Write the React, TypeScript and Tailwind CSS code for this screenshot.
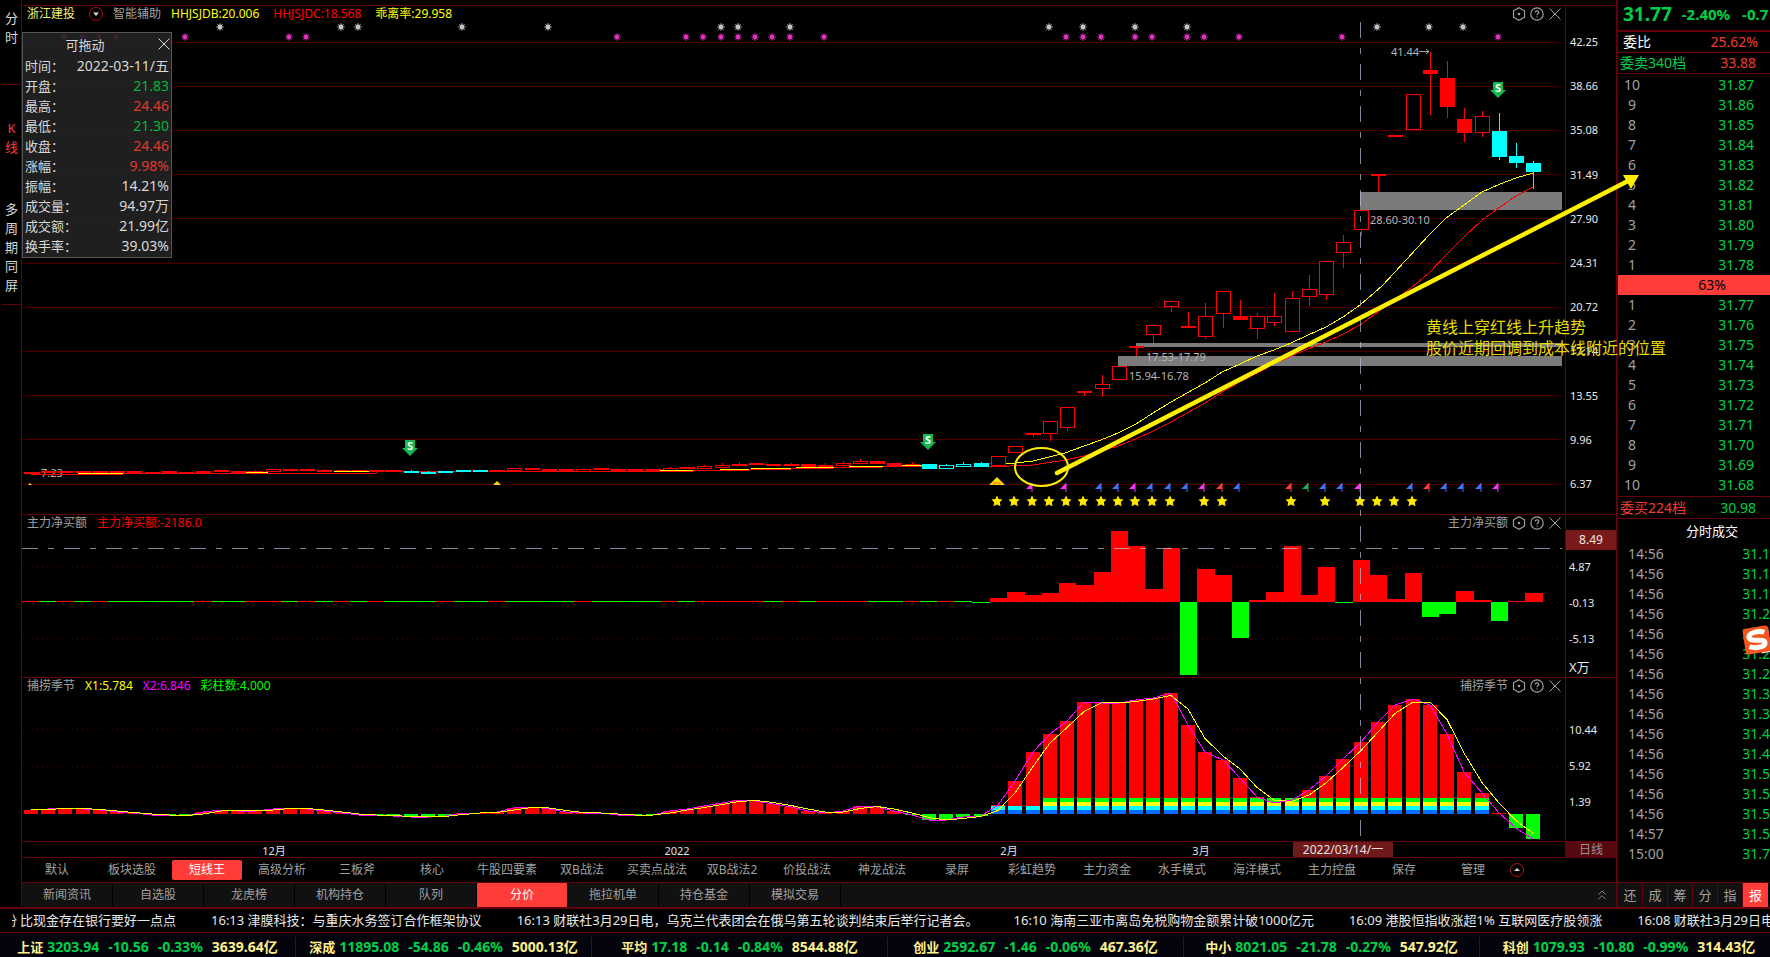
import { ReactNode } from "react";
import { ChevronsUp } from "lucide-react";

type CandleKind = "up" | "flat" | "down" | "downHollow";

interface Candle {
    kind: CandleKind;
    top: number;
    bottom: number;
    high?: number;
    low?: number;
}

// chart geometry, shared by the three panels
const FIRST_X = 30.7;
const STEP = 17.273;
const ZERO_FLOW = 602;
const ZERO_SEASON = 814;

const barX = (i: number) => Math.round(FIRST_X + STEP * i);

const flat = (y: number, high?: number): Candle => ({
    kind: "flat",
    top: y - 1,
    bottom: y + 1,
    high,
});

const up = (
    top: number,
    bottom: number,
    high?: number,
    low?: number
): Candle => ({ kind: "up", top, bottom, high, low });

const full = (
    top: number,
    bottom: number,
    high?: number,
    low?: number
): Candle => ({ kind: "flat", top, bottom, high, low });

const down = (
    top: number,
    bottom: number,
    high?: number,
    low?: number
): Candle => ({ kind: "down", top, bottom, high, low });

const downHollow = (top: number, bottom: number, high?: number): Candle => ({
    kind: "downHollow",
    top,
    bottom,
    high,
});

const candles: Candle[] = [
    flat(473), flat(472), flat(472), flat(472), flat(472), flat(472),
    flat(472), flat(473), flat(472), flat(473), flat(472, 470), flat(471),
    flat(472), flat(472, 470), up(469, 471), flat(470), flat(470),
    flat(471, 469), flat(471), flat(471), flat(471), flat(471),
    down(471, 473, 470), down(472, 474, 471), down(471, 473),
    down(470, 472), down(470, 472), flat(471), up(468, 470), flat(469),
    flat(470), flat(470), up(469, 471), flat(469), flat(470), flat(470),
    flat(470), up(468, 470, 467), flat(468), up(466, 468, 465),
    up(465, 467, 463), flat(465, 462), flat(464), flat(465),
    flat(465, 463), full(464, 467), full(465, 467, 463),
    up(463, 465, 461, 467), up(461, 463, 459), full(461, 464),
    full(463, 466), full(464, 466, 462), down(464, 469),
    downHollow(465, 468, 464), downHollow(464, 466, 462),
    down(463, 467, 462), up(456, 465, 456, 467), up(446, 452),
    full(433, 435, 433, 437), up(421, 433, 421, 441),
    up(407, 427, 407, 431), full(391, 393, 391, 396),
    up(384, 388, 375, 397), up(366, 379), full(346, 348, 346, 356),
    up(325, 334, 325, 343), up(301, 306, 301, 312),
    full(326, 328, 312), up(316, 336, 303, 339), up(291, 313, 291, 328),
    full(316, 320, 300), up(316, 328, 313, 339), up(316, 322, 293, 326),
    up(298, 331, 291), up(289, 296, 275, 306), up(261, 294, 261, 300),
    up(242, 252, 235, 268), up(210, 229, 210, 236),
    full(174, 176, 174, 192), full(135, 137), up(94, 129),
    full(70, 74, 52, 115), full(78, 107, 61, 118),
    full(119, 133, 108, 142), up(116, 132, 111, 137),
    down(131, 157, 113, 160), down(156, 163, 143, 168),
    down(163, 172, 161, 189),
];

// net inflow: r / g for the quiet days, pixel tops for the later ones
const quietFlow = "rgrgrgggggrggrrgrgrgrgggrggrggggrggggrgrrrrgrgrrrggrgrgg";
const flowTops = [
    598, 592, 595, 593, 583, 585, 572, 530, 546, 589, 548, 675, 569, 575, 638,
    600, 592, 546, 595, 567, 603, 560, 575, 599, 573, 617, 614, 591, 600, 621,
    601, 593,
];

const seasonTops = [
    810, 809, 808, 809, 810, 812, 813, 815, 815, 816, 812, 810, 811, 811, 809,
    808, 809, 811, 813, 815, 815, 816, 817, 817, 816, 813, 813, 812, 808, 807,
    809, 812, 813, 813, 815, 815, 815, 811, 809, 806, 803, 800, 801, 804, 807,
    811, 813, 811, 806, 807, 811, 815, 820, 820, 817, 816, 805, 781, 752, 734,
    721, 702, 703, 703, 700, 698, 693, 725, 752, 760, 778, 797, 803, 800, 790,
    776, 759, 742, 722, 705, 699, 705, 734, 772, 793, 813, 828, 839,
];

const greyMarks = [11, 18, 19, 25, 30, 40, 41, 44, 59, 61, 64, 67, 78, 81, 83];
const pinkMarks = [
    2, 3, 4, 5, 9, 15, 16, 34, 38, 39, 40, 41, 42, 43, 44, 46, 60, 61, 62, 64,
    65, 67, 68, 70, 76, 85,
];
const starMarks = [
    56, 57, 58, 59, 60, 61, 62, 63, 64, 65, 66, 68, 69, 73, 75, 77, 78, 79, 80,
];
const PINK = "#ff30ff";
const BLUE = "#3c78ff";
const flagMarks: [number, string][] = [
    [58, PINK], [60, PINK], [62, BLUE], [63, BLUE], [64, PINK], [65, BLUE],
    [66, BLUE], [67, BLUE], [68, PINK], [69, "#ff3c3c"], [70, BLUE],
    [73, "#ff3c3c"], [74, "#12b44c"], [75, BLUE], [76, BLUE], [77, PINK],
    [80, BLUE], [81, "#ff3c3c"], [82, BLUE], [83, BLUE], [84, BLUE],
    [85, PINK],
];

const yellowLine =
    "1006,464 1033,461 1065,453 1084,446 1101,440 1118,433 1136,424 1153,413 1171,402 1187,393 1205,383 1222,372 1240,364 1257,356 1274,350 1291,343 1308,335 1326,327 1343,317 1360,305 1382,286 1406,260 1429,235 1446,218 1464,205 1482,192 1500,184 1516,178 1533,173";
const redLine =
    "31,474 123,474 124,473 376,473 377,472 590,471 693,471 694,470 750,470 834,468 883,467 925,466 1010,466 1033,465 1065,460 1084,456 1101,451 1118,446 1136,439 1153,431 1171,422 1187,413 1205,403 1222,392 1240,382 1257,373 1274,364 1291,356 1308,349 1326,342 1343,334 1360,325 1382,309 1411,288 1429,273 1446,255 1464,237 1482,220 1500,207 1516,196 1533,187";
const flatYellow: [number, number, number][] = [
    [78, 123, 473], [246, 268, 472], [334, 369, 471], [660, 693, 470],
    [720, 749, 469], [751, 791, 468], [796, 834, 467], [849, 883, 466],
    [902, 922, 465],
];

const priceTicks = [
    "42.25", "38.66", "35.08", "31.49", "27.90", "24.31", "20.72", "17.14",
    "13.55", "9.96", "6.37",
];

const quoteRows: [string, string, string][] = [
    ["开盘", "21.83", "text-[#00b83c]"],
    ["最高", "24.46", "text-[#e03830]"],
    ["最低", "21.30", "text-[#00b83c]"],
    ["收盘", "24.46", "text-[#e03830]"],
    ["涨幅", "9.98%", "text-[#e03830]"],
    ["振幅", "14.21%", "text-[#d8d8d8]"],
    ["成交量", "94.97万", "text-[#d8d8d8]"],
    ["成交额", "21.99亿", "text-[#d8d8d8]"],
    ["换手率", "39.03%", "text-[#d8d8d8]"],
];

const sells = [
    "31.87", "31.86", "31.85", "31.84", "31.83", "31.82", "31.81", "31.80",
    "31.79", "31.78",
];
const buys = [
    "31.77", "31.76", "31.75", "31.74", "31.73", "31.72", "31.71", "31.70",
    "31.69", "31.68",
];
const trades: [string, string][] = [
    ["14:56", "31.1"], ["14:56", "31.1"], ["14:56", "31.1"],
    ["14:56", "31.2"], ["14:56", "31.2"], ["14:56", "31.2"],
    ["14:56", "31.2"], ["14:56", "31.3"], ["14:56", "31.3"],
    ["14:56", "31.4"], ["14:56", "31.4"], ["14:56", "31.5"],
    ["14:56", "31.5"], ["14:56", "31.5"], ["14:57", "31.5"],
    ["15:00", "31.7"],
];

const templates = [
    "默认", "板块选股", "短线王", "高级分析", "三板斧", "核心", "牛股四要素",
    "双B战法", "买卖点战法", "双B战法2", "价投战法", "神龙战法", "录屏",
    "彩虹趋势", "主力资金", "水手模式", "海洋模式", "主力控盘",
];
const navTabs = [
    "新闻资讯", "自选股", "龙虎榜", "机构持仓", "队列", "分价", "拖拉机单",
    "持仓基金", "模拟交易",
];
const sideTabs = ["还", "成", "筹", "分", "指", "报"];

const news = [
    "16:13 津膜科技：与重庆水务签订合作框架协议",
    "16:13 财联社3月29日电，乌克兰代表团会在俄乌第五轮谈判结束后举行记者会。",
    "16:10 海南三亚市离岛免税购物金额累计破1000亿元",
    "16:09 港股恒指收涨超1% 互联网医疗股领涨",
    "16:08 财联社3月29日电",
];

const indices = [
    ["上证", "3203.94", "-10.56", "-0.33%", "3639.64亿"],
    ["深成", "11895.08", "-54.86", "-0.46%", "5000.13亿"],
    ["平均", "17.18", "-0.14", "-0.84%", "8544.88亿"],
    ["创业", "2592.67", "-1.46", "-0.06%", "467.36亿"],
    ["中小", "8021.05", "-21.78", "-0.27%", "547.92亿"],
    ["科创", "1079.93", "-10.80", "-0.99%", "314.43亿"],
];

const CloseIcon = () => (
    <svg viewBox="0 0 14 14" className="size-[14px]" fill="none" stroke="currentColor">
        <path d="M1.500 1.500L12.500 12.500M12.500 1.500L1.500 12.500" />
    </svg>
);

const GridLines = ({ ys, dash }: { ys: number[]; dash: string }) => (
    <>
        {ys.map((y) => (
            <line
                key={y}
                x1="22"
                x2="1562"
                y1={y + 0.5}
                y2={y + 0.5}
                stroke="#60000a"
                strokeDasharray={dash}
            />
        ))}
    </>
);

const CandleShape = ({ candle, x }: { candle: Candle; x: number }) => {
    const { kind, top, bottom, high, low } = candle;
    const color = kind === "up" || kind === "flat" ? "#ff0000" : "#00ffff";
    const hollow = kind === "up" || kind === "downHollow";

    return (
        <g stroke={color}>
            {high !== undefined && (
                <line x1={x + 0.5} x2={x + 0.5} y1={high} y2={top} />
            )}
            {low !== undefined && (
                <line x1={x + 0.5} x2={x + 0.5} y1={bottom} y2={low} />
            )}
            {hollow ? (
                <rect
                    x={x - 6.5}
                    y={top + 0.5}
                    width="14"
                    height={bottom - top}
                    fill="#000"
                />
            ) : (
                <rect
                    x={x - 7}
                    y={top}
                    width="15"
                    height={bottom - top}
                    fill={color}
                    stroke="none"
                />
            )}
        </g>
    );
};

const Spark = ({ x, y, color }: { x: number; y: number; color: string }) => (
    <g transform={`translate(${x} ${y})`}>
        <path
            d="M0-4V4M-4 0H4M-2.8-2.8L2.8 2.8M2.8-2.8L-2.8 2.8"
            stroke={color}
            strokeOpacity="0.6"
            strokeWidth="1.2"
        />
        <circle r="2.4" fill={color} />
    </g>
);

const SellBadge = ({ x, y }: { x: number; y: number }) => (
    <g transform={`translate(${x} ${y})`}>
        <path d="M-5 0H5V8H8L0 16L-8 8H-5Z" fill="#12b850" />
        <text
            x="0"
            y="10"
            fill="#fff"
            fontSize="11"
            fontWeight="700"
            textAnchor="middle"
        >
            S
        </text>
    </g>
);

const PriceChart = () => (
    <svg viewBox="22 22 1543 492" className="block w-full h-auto">
        <GridLines
            ys={[42, 86, 130, 174, 218, 263, 307, 351, 395, 439, 484]}
            dash="1 1"
        />
        <g fill="#7b7b7b">
            <rect x="1360" y="192" width="202" height="18" />
            <rect x="1136" y="343" width="426" height="4" />
            <rect x="1118" y="356" width="444" height="10" />
        </g>
        <g fill="#b4b4b4" fontSize="11">
            <text x="1370" y="224">28.60-30.10</text>
            <text x="1146" y="361">17.53-17.79</text>
            <text x="1129" y="380">15.94-16.78</text>
            <text x="1391" y="56">41.44</text>
            <text x="41" y="477">7.23</text>
        </g>
        <path
            d="M1419 51.5H1429M1426 49L1429 51.5L1426 54M31 473H40"
            stroke="#a8a8a8"
            fill="none"
        />
        {greyMarks.map((i) => (
            <Spark key={i} x={barX(i) - 1} y={27} color="#c4c4c4" />
        ))}
        {pinkMarks.map((i) => (
            <Spark key={i} x={barX(i) - 1} y={37} color="#e030c0" />
        ))}
        <polyline
            points={redLine}
            fill="none"
            stroke="#ff0000"
            shapeRendering="crispEdges"
        />
        {candles.map((c, i) => (
            <CandleShape key={i} candle={c} x={barX(i)} />
        ))}
        {flatYellow.map(([x1, x2, y]) => (
            <line
                key={x1}
                x1={x1}
                x2={x2}
                y1={y + 0.5}
                y2={y + 0.5}
                stroke="#ffff00"
            />
        ))}
        <polyline
            points={yellowLine}
            fill="none"
            stroke="#ffff00"
            shapeRendering="crispEdges"
        />
        <SellBadge x={410} y={440} />
        <SellBadge x={928} y={434} />
        <SellBadge x={1498} y={82} />
        <g fill="#ffd800">
            <path d="M28 485L30 483L32 485Z" />
            <path d="M493 485L497 481L501 485Z" />
            <path d="M989 485L997 477L1005 485Z" />
        </g>
        <path d="M994 485V483H1000V485" fill="none" stroke="#ff6a20" />
        {flagMarks.map(([i, color]) => (
            <g key={i} transform={`translate(${barX(i) - 1} 483)`}>
                <path d="M0 0V6H-6Z" fill={color} />
                <line y1="0" y2="9" stroke={color} />
            </g>
        ))}
        {starMarks.map((i) => (
            <path
                key={i}
                transform={`translate(${barX(i) - 1} 501)`}
                d="M0-5.500L1.700-2L5.500-1.500L2.800 1.300L3.500 5.300L0 3.600L-3.500 5.300L-2.800 1.300L-5.500-1.500L-1.700-2Z"
                fill="#ffe800"
            />
        ))}
    </svg>
);

const FlowChart = () => (
    <svg viewBox="22 531 1543 146" className="block w-full h-auto">
        <GridLines ys={[566, 602, 638]} dash="1 4" />
        {quietFlow.split("").map((c, i) => (
            <rect
                key={i}
                x={barX(i) - 9}
                y={i === 55 ? 602 : 601}
                width="18"
                height="1"
                fill={c === "r" ? "#ff0000" : "#00ff00"}
            />
        ))}
        {flowTops.map((top, k) => {
            const left = barX(k + 56) - 8;
            const width = barX(k + 57) - 8 - left;
            return (
                <rect
                    key={k}
                    x={left}
                    y={Math.min(top, ZERO_FLOW)}
                    width={width}
                    height={Math.abs(top - ZERO_FLOW)}
                    fill={top < ZERO_FLOW ? "#ff0000" : "#00ff00"}
                />
            );
        })}
    </svg>
);

const SeasonChart = () => {
    const fast = seasonTops.map((y, i) => `${barX(i)},${y}`).join(" ");
    const slow = seasonTops
        .map((y, i) => `${barX(i)},${(y + seasonTops[Math.max(0, i - 1)]) / 2}`)
        .join(" ");

    return (
        <svg viewBox="22 694 1543 147" className="block w-full h-auto overflow-visible">
            <GridLines ys={[729, 766, 802]} dash="1 4" />
            {seasonTops.map((top, i) => (
                <g key={i} transform={`translate(${barX(i) - 7} 0)`}>
                    <rect
                        y={Math.min(top, ZERO_SEASON)}
                        width="14"
                        height={Math.abs(top - ZERO_SEASON)}
                        fill={top < ZERO_SEASON ? "#ff0000" : "#00ff00"}
                    />
                    {i >= 56 && i <= 84 && (
                        <>
                            <rect y="810" width="14" height="4" fill="#0a6cff" />
                            <rect y="806" width="14" height="4" fill="#00ffff" />
                        </>
                    )}
                    {i >= 59 && i <= 84 && (
                        <>
                            <rect y="802" width="14" height="4" fill="#ffff00" />
                            <rect y="798" width="14" height="4" fill="#00ff00" />
                        </>
                    )}
                </g>
            ))}
            <g fill="none" shapeRendering="crispEdges">
                <polyline points={fast} stroke="#ff00ff" />
                <polyline points={slow} stroke="#ffff00" />
            </g>
        </svg>
    );
};

const PanelControls = ({ title }: { title?: string }) => (
    <div className="flex items-center text-[#a0a0a0]">
        {title && <span className="mr-1">{title}</span>}
        <button aria-label="设置" className="mr-1">
            <svg viewBox="0 0 14 14" className="size-[14px]" fill="none" stroke="currentColor">
                <path d="M7 .8L12.5 3.8V10.2L7 13.2L1.500 10.2V3.800Z" strokeWidth="1.2" />
                <circle cx="7" cy="7" r="1.300" fill="currentColor" stroke="none" />
            </svg>
        </button>
        <button aria-label="帮助" className="mr-1">
            <svg viewBox="0 0 14 14" className="size-[14px]" fill="none" stroke="currentColor">
                <circle cx="7" cy="7" r="6.200" strokeWidth="1.2" />
                <path d="M5.200 5.600C5.200 3.300 8.800 3.300 8.800 5.600C8.800 6.800 7 6.900 7 8.300M7 9.400V10.600" strokeWidth="1.200" />
            </svg>
        </button>
        <button aria-label="关闭">
            <CloseIcon />
        </button>
    </div>
);

interface PanelProps {
    header: ReactNode;
    controlsTitle?: string;
    axis: ReactNode;
    children: ReactNode;
}

const Panel = ({ header, controlsTitle, axis, children }: PanelProps) => (
    <section className="flex border-t border-[#64000c]">
        <div className="relative flex-1 min-w-0">
            <div className="flex items-center justify-between h-4 pl-[5px] pr-[3px] text-xs">
                <div className="flex items-center gap-[10px]">{header}</div>
                <PanelControls title={controlsTitle} />
            </div>
            {children}
        </div>
        <div className="w-[51px] border-l border-[#64000c] text-[11px] leading-4 text-[#e8e8e8]">
            {axis}
        </div>
    </section>
);

const QuoteBox = () => (
    <div className="absolute left-0 top-[26px] w-[150px] h-[226px] border border-[#555] bg-[#222222]/90 text-[13px] text-[#d8d8d8]">
        <div className="relative flex justify-center h-[21px] pr-6 leading-6">
            可拖动
            <button aria-label="关闭" className="absolute right-0 top-1">
                <CloseIcon />
            </button>
        </div>
        <dl className="px-[2px] pt-[2px]">
            <div className="flex justify-between h-5 leading-5">
                <dt>时间：</dt>
                <dd className="text-sm leading-5">2022-03-11/五</dd>
            </div>
            {quoteRows.map(([label, value, color]) => (
                <div key={label} className="flex justify-between h-5 leading-5">
                    <dt>{label}：</dt>
                    <dd className={"text-sm leading-5 " + color}>{value}</dd>
                </div>
            ))}
        </dl>
    </div>
);

const TimeAxis = () => (
    <div className="flex border-t border-[#64000c]">
        <svg viewBox="22 842 1543 15" className="block flex-1 min-w-0 h-auto">
            <g fill="#e0e0e0" fontSize="11" textAnchor="middle">
                <text x="274" y="855">12月</text>
                <text x="677" y="855">2022</text>
                <text x="1009" y="855">2月</text>
                <text x="1201" y="855">3月</text>
            </g>
            <rect x="1293" y="842" width="100" height="15" fill="#6e1a1a" />
            <text x="1343" y="854" fill="#e8e0e0" fontSize="12" textAnchor="middle">
                2022/03/14/一
            </text>
        </svg>
        <button className="w-[51px] border-l border-[#64000c] bg-[#560a10] text-xs leading-[15px] text-[#a09090]">
            日线
        </button>
    </div>
);

const OrderTable = ({ prices, from }: { prices: string[]; from: number }) => (
    <table className="w-full text-sm">
        <tbody>
            {prices.map((price, i) => (
                <tr key={price} className="h-5 leading-5">
                    <td className="w-[28px] p-0 text-center text-[#a0a0a0]">
                        {Math.abs(from - i)}
                    </td>
                    <td className="p-0 pr-4 text-right text-[#00d048]">{price}</td>
                </tr>
            ))}
        </tbody>
    </table>
);

const OrderPanel = () => (
    <aside className="flex flex-col w-[154px] shrink-0 overflow-hidden border-l-2 border-[#64000c] text-sm">
        <div className="flex items-center h-8 pl-[5px] border-b-2 border-[#64000c] font-bold text-[#00d048] whitespace-nowrap">
            <span className="text-[19px]">31.77</span>
            <span className="ml-[10px] text-[15px]">-2.40%</span>
            <span className="ml-3 text-[15px]">-0.7</span>
        </div>
        <div className="flex items-center justify-between h-[21px] pl-[5px] pr-3 border-b border-[#64000c] text-white">
            委比 <span className="text-[#f03c32]">25.62%</span>
        </div>
        <div className="flex items-center justify-between h-[21px] pl-[2px] pr-[14px] border-b border-[#64000c] text-[#00d048]">
            委卖340档 <span className="text-[#f03c32]">33.88</span>
        </div>
        <div className="pt-px">
            <OrderTable prices={sells} from={10} />
        </div>
        <div className="h-5 pl-9 bg-[#ff3c37] text-center leading-5 text-black">63%</div>
        <div className="pb-px">
            <OrderTable prices={buys} from={-1} />
        </div>
        <div className="flex items-center justify-between h-[23px] pl-[2px] pr-[14px] border-y border-[#64000c] text-[#f03c32]">
            委买224档 <span className="text-[#00d048]">30.98</span>
        </div>
        <h2 className="h-[25px] pl-9 text-center text-[13px] leading-[25px] text-white">
            分时成交
        </h2>
        <table className="w-full text-sm">
            <tbody>
                {trades.map(([time, price], i) => (
                    <tr key={i} className="h-5 leading-5">
                        <td className="p-0 pl-[10px] text-[#a0a0a0]">{time}</td>
                        <td className="w-[25px] p-0 text-[#00d048]">{price}</td>
                    </tr>
                ))}
            </tbody>
        </table>
        <div className="flex h-[25px] mt-auto border-t border-[#64000c] text-[13px]">
            {sideTabs.map((tab) => (
                <button
                    key={tab}
                    className={
                        tab === "报"
                            ? "w-[25px] bg-[#ff3c37] text-white"
                            : "w-[25px] border-r border-[#64000c] bg-[#111] text-[#a0a0a0]"
                    }
                >
                    {tab}
                </button>
            ))}
        </div>
    </aside>
);

// crosshair, hand-drawn marks and notes that lie over every panel
const Overlay = () => (
    <svg
        viewBox="0 0 1770 957"
        className="absolute left-0 top-0 w-full h-auto pointer-events-none"
    >
        <g stroke="#b4c0dc" strokeOpacity="0.7" strokeDasharray="16 10 6 10">
            <line x1="1360.5" x2="1360.500" y1="22" y2="836" />
            <line x1="22" x2="1562" y1="548.5" y2="548.500" />
        </g>
        <ellipse
            cx="1041.500"
            cy="467"
            rx="26.500"
            ry="19"
            fill="none"
            stroke="#ffee00"
            strokeWidth="2"
        />
        <line
            x1="1057"
            y1="473"
            x2="1628"
            y2="181"
            stroke="#fff000"
            strokeWidth="4.500"
            strokeLinecap="round"
        />
        <path d="M1639 175L1623 175L1631 189Z" fill="#fff000" />
        <g fill="#e6dc00" fontSize="16">
            <text x="1426" y="333">黄线上穿红线上升趋势</text>
            <text x="1426" y="354">股价近期回调到成本线附近的位置</text>
        </g>
        <g transform="translate(1757 640) rotate(-9)">
            <path d="M2 14H16V-4Z" fill="#fff" />
            <rect x="-13" y="-13" width="26" height="26" rx="3" fill="#f4561e" />
            <path
                d="M8.500-6.500C3-9.500-7.500-8.500-7.500-3.500C-7.500 1.500 7.500-1 7.500 3.500C7.500 8.500-3 8.500-8.500 5.500"
                fill="none"
                stroke="#fff"
                strokeWidth="5"
            />
        </g>
    </svg>
);

const App = () => {
    return (
        <div className="relative flex flex-col w-full min-h-screen overflow-hidden bg-black font-['Noto_Sans','Noto_Sans_CJK_SC',sans-serif]">
            <div className="flex">
                <nav className="flex flex-col items-center w-[22px] shrink-0 border-r border-[#64000c] pt-[9px] pl-[2px] text-[13px] leading-[19px] text-[#d8d8d8]">
                    <button className="w-full h-[76px] flex flex-col items-center border-b border-[#64000c]">
                        <span>分</span>
                        <span>时</span>
                    </button>
                    <button className="w-full h-[115px] pt-[34px] flex flex-col items-center text-[#ff3c37]">
                        <span>K</span>
                        <span>线</span>
                    </button>
                    <button className="w-full h-[105px] flex flex-col items-center border-b border-[#64000c]">
                        {"多周期同屏".split("").map((c) => (
                            <span key={c}>{c}</span>
                        ))}
                    </button>
                </nav>

                <main className="flex-1 min-w-0 pt-[5px]">
                    <Panel
                        header={
                            <>
                                <h1 className="mr-1 text-[#f0f078]">浙江建投</h1>
                                <button aria-label="展开">
                                    <svg viewBox="0 0 14 14" className="size-[14px]">
                                        <circle cx="7" cy="7" r="6.500" fill="none" stroke="#b41414" />
                                        <path d="M4 5.500H10L7 9Z" fill="#d8d8d8" />
                                    </svg>
                                </button>
                                <span className="text-[#a0a0a0]">智能辅助</span>
                                <span className="mr-1 text-[#ffff00]">HHJSJDB:20.006</span>
                                <span className="mr-1 text-[#ff0000]">HHJSJDC:18.568</span>
                                <span className="text-[#ffff00]">乖离率:29.958</span>
                            </>
                        }
                        axis={
                            <div className="flex flex-col justify-between h-full pt-7 pb-[22px] pl-1">
                                {priceTicks.map((tick) => (
                                    <span key={tick}>{tick}</span>
                                ))}
                            </div>
                        }
                    >
                        <PriceChart />
                        <QuoteBox />
                    </Panel>

                    <Panel
                        controlsTitle="主力净买额"
                        header={
                            <>
                                <span className="text-[#a0a0a0]">主力净买额</span>
                                <span className="text-[#ff0000]">主力净买额:-2186.0</span>
                            </>
                        }
                        axis={
                            <div className="flex flex-col pt-[15px]">
                                <span className="h-5 bg-[#781a1a] text-center text-xs leading-5">
                                    8.49
                                </span>
                                <div className="flex flex-col gap-5 mt-[9px] pl-[3px]">
                                    <span>4.87</span>
                                    <span>-0.13</span>
                                    <span>-5.13</span>
                                </div>
                                <span className="mt-3 pl-[3px] text-[13px]">X万</span>
                            </div>
                        }
                    >
                        <FlowChart />
                    </Panel>

                    <Panel
                        controlsTitle="捕捞季节"
                        header={
                            <>
                                <span className="text-[#a0a0a0]">捕捞季节</span>
                                <span className="text-[#ffff00]">X1:5.784</span>
                                <span className="text-[#ff00ff]">X2:6.846</span>
                                <span className="text-[#00ff00]">彩柱数:4.000</span>
                            </>
                        }
                        axis={
                            <div className="flex flex-col gap-5 pt-11 pl-[3px]">
                                <span>10.44</span>
                                <span>5.92</span>
                                <span>1.39</span>
                            </div>
                        }
                    >
                        <SeasonChart />
                    </Panel>

                    <TimeAxis />

                    <div className="flex items-center gap-[5px] h-[25px] border-t border-[#64000c] text-xs whitespace-nowrap">
                        {templates.map((name) => (
                            <button
                                key={name}
                                className={
                                    name === "短线王"
                                        ? "w-[70px] h-5 rounded-[2px] bg-[#ff3c37] text-white"
                                        : "w-[70px] h-5 text-[#a0a0a0]"
                                }
                            >
                                {name}
                            </button>
                        ))}
                        <button className="w-16 h-5 text-[#a0a0a0]">保存</button>
                        <button className="w-16 h-5 text-[#a0a0a0]">管理</button>
                        <button aria-label="收起">
                            <svg viewBox="0 0 14 14" className="size-[14px]">
                                <circle cx="7" cy="7" r="6.500" fill="none" stroke="#b41414" />
                                <path d="M4 8H10L7 5Z" fill="#d8d8d8" />
                            </svg>
                        </button>
                    </div>

                    <div className="flex items-center gap-px h-[25px] border-t border-[#64000c] text-xs">
                        {navTabs.map((name) => (
                            <button
                                key={name}
                                className={
                                    name === "分价"
                                        ? "w-[90px] h-6 bg-[#ff3c37] text-white"
                                        : "w-[90px] h-6 bg-[#111] text-[#a0a0a0]"
                                }
                            >
                                {name}
                            </button>
                        ))}
                        <div className="flex items-center justify-end flex-1 h-6 pr-[6px] bg-[#111] text-[#a0a0a0]">
                            <button aria-label="展开面板">
                                <ChevronsUp className="size-4" strokeWidth={1.2} />
                            </button>
                        </div>
                    </div>
                </main>

                <OrderPanel />
            </div>

            <div className="flex items-center gap-[35px] h-[26px] pl-3 overflow-hidden border-t-2 border-b border-[#64000c] text-[13px] text-[#e8e8e8] whitespace-nowrap">
                <a href="#" className="flex gap-[3px] shrink-0">
                    <span className="flex justify-end w-[5px] overflow-hidden">份</span>
                    比现金存在银行要好一点点
                </a>
                {news.map((item) => (
                    <a key={item} href="#" className="shrink-0">
                        {item}
                    </a>
                ))}
            </div>

            <footer className="grid grid-cols-[repeat(5,296fr)_290fr] flex-1 pt-1 bg-[#04040c] text-sm font-bold whitespace-nowrap">
                {indices.map(([name, value, diff, percent, amount]) => (
                    <div
                        key={name}
                        className="flex items-center justify-center gap-[9px] border-r border-[#64000c] last:border-r-0 last:pl-2 text-[#00d048]"
                    >
                        <span className="flex items-center gap-1">
                            <span className="text-[13px] text-[#fff08c]">{name}</span>
                            {value}
                        </span>
                        <span>{diff}</span>
                        <span>{percent}</span>
                        <span className="text-[#fff08c]">{amount}</span>
                    </div>
                ))}
            </footer>
            <Overlay />
        </div>
    );
};

export default App;
